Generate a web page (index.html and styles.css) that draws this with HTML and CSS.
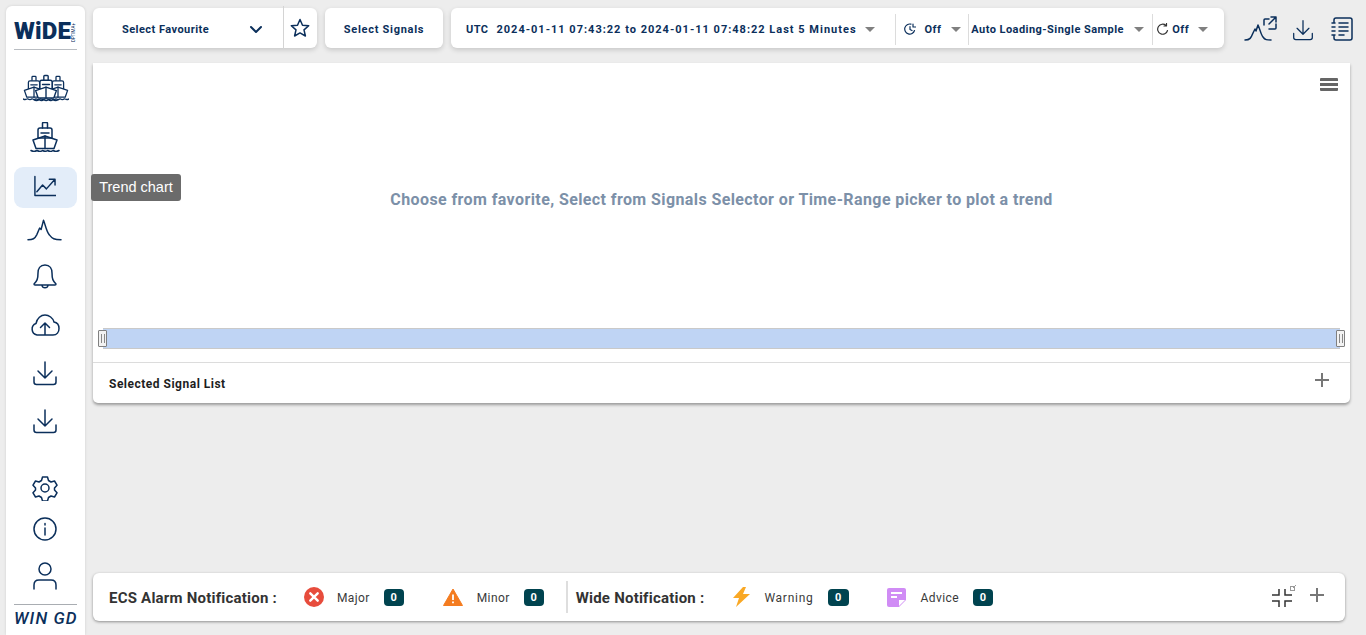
FILE: index.html
```html
<!DOCTYPE html>
<html lang="en">
  <head>
    <title>Trend Chart</title>
    <link rel="stylesheet" href="styles.css">
  </head>

  <body>
    <svg class="defs">
      <symbol id="ship" viewBox="0 0 30 30" overflow="visible">
        <path d="M12.500 6V1.500a1 1 0 0 1 1-1h3a1 1 0 0 1 1 1V6" />
        <path d="M8 16V8a2 2 0 0 1 2-2h10a2 2 0 0 1 2 2v8z" />
        <path d="M11 11h8" />
        <path d="M3 18L15 14l12 4-3 8.500H6z" />
        <path d="M15 14v12.500" fill="none" />
        <path d="M1 28.500c2 1.200 4 1.200 6 0 2 1.200 4 1.200 5.500 0 2 1.200 3.500 1.200 5 0 2 1.200 4 1.200 5.500 0 2 1.200 4 1.200 6 0" fill="none" />
      </symbol>
      <symbol id="download" viewBox="0 0 26 26" overflow="visible">
        <path d="M13 2v16M6 11l7 7 7-7M2 17v5c0 1.500 1 2.500 2.500 2.500h17c1.500 0 2.500-1 2.500-2.500v-5" />
      </symbol>
    </svg>

    <div class="app">
      <nav class="sidebar">
        <div class="logo">
          <span class="logo-text">WiDE</span>
          <span class="logo-tag">OPTIMA+</span>
        </div>

        <a class="nav-item nav-fleet">
          <svg width="46" height="28" viewBox="0 0 46 28" class="icon fleet">
            <use href="#ship" x="-1" y="2" width="24" height="24" />
            <use href="#ship" x="23" y="2" width="24" height="24" />
            <use href="#ship" x="10" y="1" width="26" height="26" />
          </svg>
        </a>
        <a class="nav-item nav-ship">
          <svg width="30" height="30" viewBox="0 0 30 30" class="icon">
            <use href="#ship" width="30" height="30" />
          </svg>
        </a>
        <a class="nav-item nav-active">
          <svg width="23" height="22" viewBox="0 0 24 22" class="icon">
            <path d="M2 1v20h22" />
            <path d="M4 17l6-7 4 4 8-9M17 4h6v6" />
          </svg>
        </a>
        <a class="nav-item nav-peak">
          <svg width="35" height="24" viewBox="0 0 36 24" class="icon">
            <path d="M1 22c5 0 7-1 9-5l3-7 1.500 1.500L17 2c2 5 3 12 6 15 3 4 5 5 12 5" />
          </svg>
        </a>
        <a class="nav-item">
          <svg width="26" height="28" viewBox="0 0 26 28" class="icon">
            <path d="M13 2c-5 0-7 4-7 8 0 6-1 8-4 11 0 1 0 1 1 1h20c1 0 1 0 1-1-3-3-4-5-4-11 0-4-2-8-7-8zM10 22.500c.5 3 5.500 3 6 0" />
          </svg>
        </a>
        <a class="nav-item">
          <svg width="30" height="24" viewBox="0 0 30 24" class="icon">
            <path d="M10 22H7a6 6 0 0 1-1-11.500C7 5 11 2 15 2s8 3 9 7c3 .5 5 3 5 6.500S27 22 23 22h-3M15 22V10M10.500 14.500L15 10l4.500 4.500M10 22h10" />
          </svg>
        </a>
        <a class="nav-item">
          <svg width="26" height="26" viewBox="0 0 26 26" class="icon">
            <use href="#download" width="26" height="26" />
          </svg>
        </a>
        <a class="nav-item">
          <svg width="26" height="26" viewBox="0 0 26 26" class="icon">
            <use href="#download" width="26" height="26" />
          </svg>
        </a>

        <a class="nav-item nav-settings">
          <svg width="26" height="26" viewBox="0 0 26 26" class="icon">
            <circle cx="13" cy="13" r="4" />
            <path d="M10.500 2h5l1 3.500 2.500 1.500 3.500-1 2.500 4.200-2.500 2.800v2l2.500 2.800-2.500 4.200-3.500-1-2.500 1.500-1 3.500h-5l-1-3.500L7 21l-3.500 1L1 17.800 3.500 15v-2L1 10.200 3.500 6 7 7l2.500-1.500z" />
          </svg>
        </a>
        <a class="nav-item nav-info">
          <svg width="24" height="24" viewBox="0 0 24 24" class="icon">
            <circle cx="12" cy="12" r="11" />
            <path d="M12 11v7M12 6.500v1.500" />
          </svg>
        </a>
        <a class="nav-item nav-user">
          <svg width="26" height="28" viewBox="0 0 26 28" class="icon">
            <circle cx="13" cy="7" r="6" />
            <path d="M2 27v-4c0-3 2-5 5-5h12c3 0 5 2 5 5v4" />
          </svg>
        </a>

        <div class="maker">WIN GD</div>
      </nav>

      <main class="content">
        <header class="toolbar">
          <div class="card card-fav">
            <span class="tool-label fav-label">Select Favourite</span>
            <svg width="14" height="9" viewBox="0 0 14 9" class="icon chevron">
              <path d="M2 2l5 5 5-5" />
            </svg>
            <span class="fav-star">
              <svg width="20" height="20" viewBox="0 0 20 20" class="icon star">
                <path d="M10 1.500l2.500 5.700 6.200.6-4.700 4.100 1.400 6.100L10 14.900l-5.400 3.100L6 11.900 1.300 7.800l6.200-.6z" />
              </svg>
            </span>
          </div>

          <div class="card card-signals">
            <span class="tool-label signals-label">Select Signals</span>
          </div>

          <div class="card card-time">
            <span class="tool-label utc">UTC</span>
            <span class="tool-label range">2024-01-11 07:43:22 to 2024-01-11 07:48:22 Last 5 Minutes</span>
            <i class="caret caret-range"></i>
            <span class="v-line"></span>
            <svg width="12" height="12" viewBox="0 0 12 12" class="icon small clock">
              <path d="M10.500 7.500A5 5 0 1 1 7 1.200M6 3.500V6.500L8 7.500M9 1v3h2.500" />
            </svg>
            <span class="tool-label off-a">Off</span>
            <i class="caret caret-off"></i>
            <span class="v-line line-auto"></span>
            <span class="tool-label auto">Auto Loading-Single Sample</span>
            <i class="caret caret-auto"></i>
            <span class="v-line line-refresh"></span>
            <svg width="12" height="12" viewBox="0 0 12 12" class="icon small dark refresh">
              <path d="M10.500 7.500A5 5 0 1 1 9 2.500M9.500 .5v2.500H7" />
            </svg>
            <span class="tool-label off-b">Off</span>
            <i class="caret caret-last"></i>
          </div>

          <div class="tool-icons">
            <svg width="34" height="25" viewBox="0 0 34 25" class="icon">
              <path d="M1 24c5 0 6-2 8-7l2-4 1 2 2-6c2 4 3 10 5 12 2 3 4 3 8 3M20 9V4a1 1 0 0 1 1-1h4M32 8v4a1 1 0 0 1-1 1h-6" />
              <path d="M25 8l7-7M27 1h5v5" />
            </svg>
            <svg width="22" height="22" viewBox="0 0 26 26" class="icon tool-download">
              <use href="#download" width="26" height="26" />
            </svg>
            <svg width="22" height="24" viewBox="0 0 22 24" class="icon tool-notes">
              <path d="M3 5V3a2 2 0 0 1 2-2h14a2 2 0 0 1 2 2v18a2 2 0 0 1-2 2H5a2 2 0 0 1-2-2v-2M8 6h9M8 10h9M8 14h9M8 18h5M1 6h3M1 10h3M1 14h3M1 18h3" />
            </svg>
          </div>
        </header>

        <section class="panel">
          <div class="chart">
            <div class="menu-row">
              <span class="hamburger"></span>
            </div>
            <p class="empty-msg">Choose from favorite, Select from Signals Selector or Time-Range picker to plot a trend</p>
            <div class="zoom-bar">
              <span class="zoom-handle"></span>
              <span class="zoom-handle"></span>
            </div>
          </div>
          <div class="signal-row">
            <span class="signal-title">Selected Signal List</span>
            <span class="plus"></span>
          </div>
        </section>

        <footer class="notify">
          <strong class="notify-title">ECS Alarm Notification :</strong>
          <svg width="20" height="20" viewBox="0 0 20 20" class="flag flag-major">
            <circle cx="10" cy="10" r="10" fill="#e74c3c" />
            <path d="M6.300 6.300l7.400 7.400M13.700 6.300l-7.400 7.400" stroke="#fff" stroke-width="2.400" stroke-linecap="round" />
          </svg>
          <span class="flag-text text-major">Major</span>
          <span class="badge">0</span>
          <svg width="20" height="18" viewBox="0 0 20 18" class="flag flag-minor">
            <path d="M10 1L19.500 17.500H.5z" fill="#f47c20" stroke="#f47c20" stroke-linejoin="round" />
            <path d="M10 6.500v5.500M10 13.500v1.800" stroke="#fff" stroke-width="1.800" />
          </svg>
          <span class="flag-text text-minor">Minor</span>
          <span class="badge">0</span>
          <span class="notify-line"></span>
          <strong class="notify-title">Wide Notification :</strong>
          <svg width="18" height="20" viewBox="0 0 18 20" class="flag flag-warning">
            <path d="M11 0L1 11h6l-3 9L18 7h-7l3-7z" fill="#f9a825" />
          </svg>
          <span class="flag-text text-warning">Warning</span>
          <span class="badge badge-wide">0</span>
          <svg width="19" height="19" viewBox="0 0 19 19" class="flag flag-advice">
            <path d="M2 0h15a2 2 0 0 1 2 2v10l-7 7H2a2 2 0 0 1-2-2V2a2 2 0 0 1 2-2z" fill="#d08cf5" />
            <path d="M4 5h11M4 9h6" stroke="#fff" stroke-width="1.800" />
            <path d="M12 18v-6h6" fill="#fff" />
          </svg>
          <span class="flag-text text-advice">Advice</span>
          <span class="badge">0</span>

          <span class="notify-tools">
            <svg width="26" height="23" viewBox="0 0 26 23" class="collapse">
              <path d="M0 10H7V4M13 4V10H20M0 16H7V22M13 22V16H20" fill="none" stroke="#333" stroke-width="1.500" />
              <rect x="18.500" y="1.500" width="4" height="4" fill="none" stroke="#999" />
              <path d="M21 3l3-3" stroke="#999" />
            </svg>
            <span class="plus plus-notify"></span>
          </span>
        </footer>
      </main>
    </div>

    <div class="tooltip">Trend chart</div>
  </body>
</html>
```

FILE: styles.css
```css
* {
  box-sizing: border-box;
}
html,
body {
  height: 100%;
  margin: 0;
  overflow: hidden;
}
body {
  background-color: #ededed;
  color: #0b2f5b;
  font-family: Roboto, "Liberation Sans", sans-serif;
}
.defs {
  display: none;
}
.app {
  display: flex;
  height: 100%;
}
.icon {
  fill: none;
  stroke: #0b2f5b;
  stroke-width: 1.500;
  stroke-linecap: round;
  stroke-linejoin: round;
  flex: none;
}
.fleet {
  fill: #fff;
  stroke-width: 1.600;
}

/* left rail */
.sidebar {
  width: 79px;
  margin: 6px 0 0 6px;
  padding: 0 8px;
  background-color: #fff;
  border-radius: 6px 6px 0 0;
  box-shadow: 0 0 3px rgba(0, 0, 0, 0.12);
  display: flex;
  flex-direction: column;
  align-items: stretch;
  flex: none;
}
.logo {
  height: 44px;
  padding-top: 12px;
  border-bottom: 1px solid #b9bdc2;
  display: flex;
  align-items: flex-start;
  gap: 0;
}
.logo-text {
  font-size: 24px;
  font-weight: 900;
  line-height: 26px;
  letter-spacing: 0.2px;
}
.logo-tag {
  writing-mode: vertical-rl;
  transform: rotate(180deg);
  font-size: 4.500px;
  line-height: 5px;
  margin-top: 5px;
}
.nav-item {
  height: 41px;
  margin-bottom: 7px;
  padding-right: 2px;
  border-radius: 9px;
  display: flex;
  align-items: center;
  justify-content: center;
}
.nav-fleet {
  margin-top: 17px;
  margin-bottom: 9px;
  padding-right: 0;
}
.nav-ship {
  margin-bottom: 9px;
  padding-bottom: 1px;
}
.nav-active {
  background-color: #e3edf9;
  margin-bottom: 3px;
  padding-bottom: 3px;
}
.nav-peak {
  margin-bottom: 4px;
  padding-bottom: 4px;
}
.nav-settings {
  margin-top: auto;
  margin-bottom: 0;
}
.nav-info {
  margin-bottom: 6px;
}
.nav-user {
  margin-bottom: 8px;
}
.maker {
  height: 31px;
  border-top: 1px solid #a9adb2;
  font-size: 17px;
  font-weight: 500;
  font-style: italic;
  line-height: 26px;
  letter-spacing: 1.100px;
  text-align: center;
  white-space: nowrap;
}

/* top bar */
.content {
  flex: 1;
  min-width: 0;
  padding: 8px 0 14px 8px;
  display: flex;
  flex-direction: column;
}
.toolbar {
  display: flex;
  gap: 8px;
  height: 40px;
  flex: none;
}
.card {
  background-color: #fff;
  border-radius: 6px;
  box-shadow: 0 2px 5px rgba(0, 0, 0, 0.16);
  display: flex;
  align-items: center;
  height: 40px;
}
.tool-label {
  font-size: 11px;
  font-weight: 700;
  letter-spacing: 0.45px;
  padding-top: 2px;
  white-space: nowrap;
  flex: none;
}
.card-fav {
  width: 224px;
}
.fav-label {
  margin-left: 29px;
}
.chevron {
  margin-left: 40px;
  stroke-width: 2;
  margin-top: 2px;
}
.fav-star {
  margin-left: 20px;
  width: 33px;
  height: 43px;
  margin-top: -2px;
  border-left: 1px solid #d4d4d4;
  display: flex;
  align-items: center;
  justify-content: center;
}
.star {
  margin-top: 2px;
  margin-right: 1px;
}
.card-signals {
  width: 118px;
  justify-content: center;
}
.signals-label {
  letter-spacing: 0.72px;
}
.card-time {
  width: 773px;
  padding-left: 15px;
}
.range {
  margin-left: 8px;
  width: 360px;
  letter-spacing: 1px;
}
.caret {
  width: 0;
  height: 0;
  border-left: 5.500px solid transparent;
  border-right: 5.500px solid transparent;
  border-top: 5px solid #808080;
  flex: none;
  margin-top: 2px;
}
.caret-range {
  margin-left: 9px;
}
.v-line {
  width: 1px;
  height: 31px;
  background-color: #dcdcdc;
  margin-left: 20px;
  margin-top: 2px;
  flex: none;
}
.icon.small {
  stroke-width: 1.200;
  margin-top: 2px;
}
.icon.dark {
  stroke: #333;
}
.clock {
  margin-left: 8px;
}
.off-a {
  margin-left: 8px;
}
.caret-off {
  margin-left: 10px;
}
.line-auto {
  margin-left: 7px;
}
.auto {
  margin-left: 2px;
  width: 152px;
}
.caret-auto {
  margin-left: 11px;
}
.line-refresh {
  margin-left: 8px;
}
.refresh {
  margin-left: 4px;
}
.off-b {
  margin-left: 3px;
}
.caret-last {
  margin-left: 9px;
}
.tool-icons {
  display: flex;
  align-items: center;
  margin-left: 12px;
}
.tool-download {
  margin-left: 14px;
  margin-top: 4px;
}
.tool-notes {
  margin-left: 17px;
  margin-top: 2px;
}

/* chart panel */
.panel {
  width: 1257px;
  height: 340px;
  margin-top: 15px;
  background-color: #fff;
  border-radius: 0 0 5px 5px;
  box-shadow: 0 2px 3px rgba(0, 0, 0, 0.35);
  flex: none;
}
.chart {
  height: 300px;
  border-bottom: 1px solid #dcdcdc;
  display: flex;
  flex-direction: column;
}
.menu-row {
  display: flex;
  justify-content: flex-end;
  padding: 15px 12px 0 0;
}
.hamburger {
  width: 18px;
  height: 13px;
  background: linear-gradient(#666 0 3px, transparent 3px 5px, #666 5px 8px, transparent 8px 10px, #666 10px 13px);
  border-radius: 1px;
}
.empty-msg {
  margin: 97px 0 0;
  color: #7c90a8;
  font-size: 16px;
  font-weight: 700;
  line-height: 24px;
  letter-spacing: 0.4px;
  text-align: center;
}
.zoom-bar {
  height: 21px;
  margin: 116px 10px 0;
  background-color: #bfd4f4;
  border-top: 1px solid #c9c9c9;
  border-bottom: 1px solid #c9c9c9;
  display: flex;
  justify-content: space-between;
  align-items: center;
}
.zoom-handle {
  width: 9px;
  height: 17px;
  margin: 0 -5px;
  background: linear-gradient(90deg, transparent 2px, #888 2px 3px, transparent 3px 5px, #888 5px 6px, transparent 6px) #f2f2f2;
  background-size: 100% 9px;
  background-position: 0 3px;
  background-repeat: no-repeat;
  background-color: #f2f2f2;
  border: 1px solid #808080;
  border-radius: 1px;
}
.signal-row {
  height: 40px;
  padding: 0 21px 0 16px;
  display: flex;
  align-items: center;
  justify-content: space-between;
}
.signal-title {
  color: #1e1e1e;
  font-size: 12px;
  font-weight: 700;
  letter-spacing: 0.5px;
  padding-top: 2px;
}
.plus {
  width: 14px;
  height: 14px;
  background: linear-gradient(#777, #777) center / 100% 2px no-repeat, linear-gradient(#777, #777) center / 2px 100% no-repeat;
  margin-top: -7px;
  flex: none;
}

/* notification bar */
.notify {
  width: 1252px;
  height: 48px;
  margin-top: auto;
  padding-left: 16px;
  background-color: #fff;
  border-radius: 6px;
  box-shadow: 0 1px 3px rgba(0, 0, 0, 0.4);
  color: #3a3a3a;
  display: flex;
  align-items: center;
}
.notify-title {
  color: #333;
  font-size: 15px;
  font-weight: 700;
  letter-spacing: 0.22px;
  padding-top: 2px;
  white-space: nowrap;
}
.flag {
  flex: none;
}
.flag-major {
  margin-left: 27px;
}
.flag-minor {
  margin-left: 39px;
}
.flag-warning {
  margin-left: 28px;
}
.flag-advice {
  margin-left: 38px;
}
.flag-text {
  font-size: 12px;
  letter-spacing: 0.4px;
  padding-top: 1px;
}
.text-major {
  margin-left: 13px;
}
.text-minor {
  margin-left: 14px;
}
.text-warning {
  margin-left: 14px;
  letter-spacing: 0.75px;
}
.text-advice {
  margin-left: 15px;
}
.badge {
  width: 20px;
  height: 17px;
  margin-left: 14px;
  background-color: #00434f;
  border-radius: 4px;
  color: #fff;
  font-size: 11px;
  font-weight: 700;
  line-height: 17px;
  text-align: center;
  flex: none;
}
.badge-wide {
  width: 21px;
}
.notify-line {
  width: 2px;
  height: 32px;
  margin: 0 8px 0 22px;
  background-color: #dedede;
}
.notify-tools {
  margin-left: auto;
  margin-right: 21px;
  display: flex;
  align-items: center;
  gap: 12px;
}
.plus-notify {
  margin-top: -4px;
}
.collapse {
  margin-top: -2px;
}

/* hover tooltip over the rail */
.tooltip {
  position: absolute;
  left: 91px;
  top: 174px;
  width: 90px;
  height: 27px;
  background-color: #6b6b6b;
  border-radius: 3px;
  color: #fff;
  font-family: "Liberation Sans", Arial, sans-serif;
  font-size: 14.500px;
  line-height: 27px;
  text-align: center;
}
```
